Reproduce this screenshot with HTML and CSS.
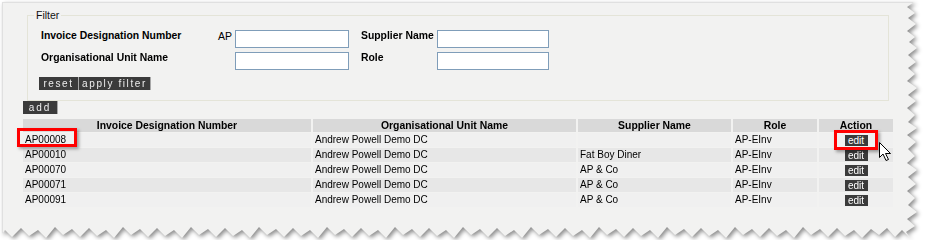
FILE: index.html
```html
<!DOCTYPE html>
<html lang="en">
<head>
    <meta charset="UTF-8">
    <title>Invoice Designations</title>
    <link rel="stylesheet" href="styles.css">
</head>
<body>
    <div class="shot">
        <div class="paper">
            <fieldset class="filter">
                <legend>Filter</legend>
                <div class="filter-grid">
                    <label class="lbl">Invoice Designation Number</label>
                    <span class="prefix">AP</span>
                    <input type="text">
                    <label class="lbl lbl-right">Supplier Name</label>
                    <input type="text">

                    <label class="lbl">Organisational Unit Name</label>
                    <span class="prefix"></span>
                    <input type="text">
                    <label class="lbl lbl-right">Role</label>
                    <input type="text">
                </div>
                <div class="filter-actions">
                    <button class="btn btn-reset">reset</button><button class="btn btn-apply">apply filter</button>
                </div>
            </fieldset>

            <button class="btn btn-add">add</button>

            <table class="grid">
                <colgroup>
                    <col style="width:288px">
                    <col style="width:263px">
                    <col style="width:153px">
                    <col style="width:84px">
                    <col style="width:74px">
                </colgroup>
                <thead>
                    <tr>
                        <th>Invoice Designation Number</th>
                        <th>Organisational Unit Name</th>
                        <th>Supplier Name</th>
                        <th>Role</th>
                        <th>Action</th>
                    </tr>
                </thead>
                <tbody>
                    <tr>
                        <td><span class="mark mark-id">AP00008</span></td>
                        <td>Andrew Powell Demo DC</td>
                        <td></td>
                        <td>AP-EInv</td>
                        <td class="action"><span class="edit mark mark-edit">edit<svg class="cursor" viewBox="0 0 13 20" width="13" height="20"><path d="M0.5 0.5 L0.5 15.5 L4 12 L7 18.5 L9.5 17.5 L6.5 11.5 L11.5 11.5 Z" fill="#fff" stroke="#000" stroke-width="1"/></svg></span></td>
                    </tr>
                    <tr>
                        <td>AP00010</td>
                        <td>Andrew Powell Demo DC</td>
                        <td>Fat Boy Diner</td>
                        <td>AP-EInv</td>
                        <td class="action"><span class="edit">edit</span></td>
                    </tr>
                    <tr>
                        <td>AP00070</td>
                        <td>Andrew Powell Demo DC</td>
                        <td>AP &amp; Co</td>
                        <td>AP-EInv</td>
                        <td class="action"><span class="edit">edit</span></td>
                    </tr>
                    <tr>
                        <td>AP00071</td>
                        <td>Andrew Powell Demo DC</td>
                        <td>AP &amp; Co</td>
                        <td>AP-EInv</td>
                        <td class="action"><span class="edit">edit</span></td>
                    </tr>
                    <tr>
                        <td>AP00091</td>
                        <td>Andrew Powell Demo DC</td>
                        <td>AP &amp; Co</td>
                        <td>AP-EInv</td>
                        <td class="action"><span class="edit">edit</span></td>
                    </tr>
                </tbody>
            </table>
        </div>
    </div>
</body>
</html>
```

FILE: styles.css
```css
body {
    margin: 0;
    background: #fff;
    font-family: "Liberation Sans", Arial, sans-serif;
    font-size: 10px;
    color: #000;
}

.shot {
    width: 920px;
    padding: 2px 0 0 2px;
    box-sizing: border-box;
    filter: drop-shadow(2px 2px 2px rgba(0, 0, 0, 0.45));
}

.paper {
    width: 918px;
    height: 238px;
    box-sizing: border-box;
    padding-top: 6px;
    background: #f2f2f1;
    border-top: 1px solid #e0e0e0;
    border-left: 1px solid #e0e0e0;
    clip-path: polygon(0px 0px, 912px 0px, 905px 5px, 913px 11px, 906px 16px, 914px 22px, 905px 29px, 913px 35px, 907px 40px, 915px 46px, 906px 53px, 914px 60px, 906px 66px, 913px 72px, 905px 79px, 915px 86px, 906px 93px, 914px 99px, 905px 106px, 913px 113px, 906px 120px, 915px 126px, 905px 133px, 914px 140px, 906px 147px, 913px 154px, 905px 161px, 915px 168px, 906px 175px, 914px 182px, 905px 189px, 913px 196px, 906px 203px, 915px 210px, 905px 217px, 913px 224px, 904px 230px, 908px 236px, 900px 228px, 893px 235px, 885px 226px, 877px 233px, 869px 227px, 860px 236px, 852px 228px, 843px 234px, 835px 226px, 826px 235px, 818px 227px, 809px 233px, 801px 225px, 792px 236px, 784px 228px, 775px 234px, 767px 226px, 758px 235px, 750px 227px, 741px 233px, 733px 225px, 724px 236px, 716px 228px, 707px 234px, 699px 226px, 690px 235px, 682px 227px, 673px 233px, 665px 225px, 656px 236px, 648px 228px, 639px 234px, 631px 226px, 622px 235px, 614px 227px, 605px 233px, 597px 225px, 588px 236px, 580px 228px, 571px 234px, 563px 226px, 554px 235px, 546px 227px, 537px 233px, 529px 225px, 520px 236px, 512px 228px, 503px 234px, 495px 226px, 486px 235px, 478px 227px, 469px 233px, 461px 225px, 452px 236px, 444px 228px, 435px 234px, 427px 226px, 418px 235px, 410px 227px, 401px 233px, 393px 225px, 384px 236px, 376px 228px, 367px 234px, 359px 226px, 350px 235px, 342px 227px, 333px 233px, 325px 225px, 316px 236px, 308px 228px, 299px 234px, 291px 226px, 282px 235px, 274px 227px, 265px 233px, 257px 225px, 248px 236px, 240px 228px, 231px 234px, 223px 226px, 214px 235px, 206px 227px, 197px 233px, 189px 225px, 180px 236px, 172px 228px, 163px 234px, 155px 226px, 146px 235px, 138px 227px, 129px 233px, 121px 225px, 112px 236px, 104px 228px, 95px 234px, 87px 226px, 78px 235px, 70px 227px, 61px 233px, 53px 225px, 44px 236px, 36px 228px, 27px 234px, 19px 226px, 10px 235px, 3px 228px, 0px 232px);
}

/* filter box */
.filter {
    width: 862px;
    box-sizing: border-box;
    margin: 0 0 0 24px;
    padding: 0 0 10px 0;
    border: 1px solid #e4e4d8;
}

.filter legend {
    margin-left: 6px;
    padding: 0 2px;
    line-height: 13px;
    font-size: 10.5px;
    color: #111;
}

.filter-grid {
    display: grid;
    grid-template-columns: 177px 17px 114px 88px 112px;
    row-gap: 4px;
    align-items: start;
    margin: 8px 0 0 13px;
}

.lbl {
    line-height: 12px;
    font-weight: bold;
    font-size: 10.4px;
}

.prefix {
    line-height: 12px;
    font-size: 10.5px;
}

.lbl-right {
    padding-left: 12px;
}

.filter-grid input {
    width: 100%;
    height: 18px;
    box-sizing: border-box;
    margin: 0;
    border: 1px solid #7f9db9;
    background: #fff;
}

.filter-actions {
    display: flex;
    margin: 7px 0 0 11px;
}

.btn {
    display: block;
    height: 13px;
    box-sizing: border-box;
    margin: 0;
    padding: 0;
    border: 0;
    border-right: 1px solid #a8a8a8;
    background: #3b3b3b;
    color: #eee;
    font-family: "Liberation Sans", Arial, sans-serif;
    font-size: 10px;
    line-height: 12px;
    letter-spacing: 1.6px;
    text-align: center;
}

.btn-reset {
    width: 40px;
}

.btn-apply {
    width: 72px;
}

.btn-add {
    width: 35px;
    margin: 0 0 0 20px;
    letter-spacing: 2px;
}

/* results table */
.grid {
    width: 874px;
    table-layout: fixed;
    border-collapse: separate;
    border-spacing: 2px 1px;
    margin: 4px 0 0 18px;
}

.grid th,
.grid td {
    padding: 0 2px;
    white-space: nowrap;
}

.grid th {
    height: 13px;
    line-height: 13px;
    background: #d9d9d9;
    font-weight: bold;
    font-size: 10.4px;
    text-align: center;
}

.grid td {
    height: 14px;
    line-height: 14px;
    text-align: left;
}

.grid tbody tr:nth-child(odd) td {
    background: #f0f0f0;
}

.grid tbody tr:nth-child(even) td {
    background: #e7e7e7;
}

.grid td.action {
    text-align: center;
}

.edit {
    display: inline-block;
    width: 23px;
    height: 11px;
    background: #3b3b3b;
    color: #fff;
    font-size: 10px;
    line-height: 11px;
    text-align: center;
    vertical-align: middle;
}

/* screenshot annotations */
.mark {
    position: relative;
}

.mark::after {
    content: "";
    position: absolute;
    border: 3px solid #f00;
    box-shadow: 2px 2px 3px rgba(0, 0, 0, 0.35);
}

.mark-id::after {
    left: -8px;
    right: -11px;
    top: -6px;
    bottom: -2px;
}

.mark-edit::after {
    left: -11px;
    right: -10px;
    top: -5px;
    bottom: -4px;
}

.cursor {
    position: absolute;
    left: 34px;
    top: 7px;
    z-index: 2;
}
```
